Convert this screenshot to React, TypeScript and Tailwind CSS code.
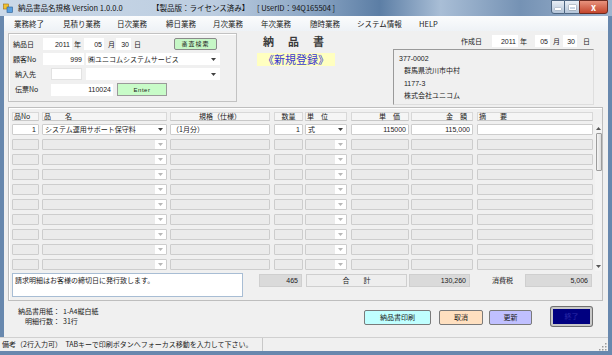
import React from 'react';

type P = { className?: string; children?: React.ReactNode };

function Arrow({ light }: { light?: boolean }) {
  return (
    <svg width="5" height="3" viewBox="0 0 5 3" className="shrink-0">
      <path d="M0 0h5L2.5 3z" fill={light ? '#b8b8b8' : '#404040'} />
    </svg>
  );
}

function Cell({ className = '', children }: P) {
  return (
    <div className={`flex h-[11px] shrink-0 items-center rounded-[1px] border border-[#cdcdcd] ${className}`}>
      {children}
    </div>
  );
}

function Combo({ className = '', children, empty }: P & { empty?: boolean }) {
  return (
    <Cell className={`${empty ? 'bg-[#ebebeb]' : 'bg-white'} ${className}`}>
      <span className="flex-1 whitespace-nowrap pl-[2px]">{children}</span>
      <span className="flex h-full w-[11px] items-center justify-center bg-white">
        <Arrow light={empty} />
      </span>
    </Cell>
  );
}

function Input({ className = '', children }: P) {
  return <div className={`flex h-[12px] shrink-0 items-center justify-end bg-white pr-[2px] font-['Liberation_Sans',sans-serif] text-[7px] ${className}`}>{children}</div>;
}

function HeadCell({ className = '', children }: P) {
  return (
    <div className={`flex h-[9px] shrink-0 items-center border border-[#d8d8d8] border-b-[#c8c8c8] bg-[#f5f5f5] ${className}`}>
      {children}
    </div>
  );
}

function Row({ empty, data }: { empty?: boolean; data?: string[] }) {
  const bg = empty ? 'bg-[#ebebeb]' : 'bg-white';
  const d = data ?? [];
  return (
    <div className="flex h-[11px] items-center">
      <Cell className={`w-[27px] justify-end pr-[2px] font-['Liberation_Sans',sans-serif] ${bg}`}>{d[0]}</Cell>
      <Combo className="ml-[3px] w-[125px]" empty={empty}>{d[1]}</Combo>
      <Cell className={`ml-[3px] w-[100px] pl-[1px] ${bg}`}>{d[2]}</Cell>
      <Cell className={`ml-[4px] w-[29px] justify-end pr-[2px] font-['Liberation_Sans',sans-serif] ${bg}`}>{d[3]}</Cell>
      <Combo className="ml-[2px] w-[42px]" empty={empty}>{d[4]}</Combo>
      <Cell className={`ml-[4px] w-[58px] justify-end pr-[2px] font-['Liberation_Sans',sans-serif] ${bg}`}>{d[5]}</Cell>
      <Cell className={`ml-[2px] w-[62px] justify-end pr-[2px] font-['Liberation_Sans',sans-serif] ${bg}`}>{d[6]}</Cell>
      <Cell className={`ml-[4px] w-[116px] ${bg}`}>{d[7]}</Cell>
    </div>
  );
}

const menus = [
  ['業務終了', 'ml-[10px] w-[49px]'],
  ['見積り業務', 'w-[54px]'],
  ['日次業務', 'w-[49px]'],
  ['締日業務', 'w-[47px]'],
  ['月次業務', 'w-[48px]'],
  ['年次業務', 'w-[49px]'],
  ['随時業務', 'w-[47px]'],
  ['システム情報', 'w-[62px]'],
  ['HELP', 'w-[40px]'],
];

export default function App() {
  return (
    <div className="flex h-[355px] w-[612px] flex-col overflow-hidden bg-[#6888ae] font-['Noto_Sans_CJK_JP',sans-serif] text-[7px] leading-none text-[#1a1a1a]">
      {/* title bar */}
      <div className="flex h-[16px] shrink-0 items-center bg-[linear-gradient(90deg,#cbd9e8_0%,#bccde0_35%,#8ea8c6_50%,#5c7ea5_62%,#a9bed6_72%,#7592b4_85%,#9fb5cf_100%)] text-[7.5px] text-[#111]">
        <svg width="10" height="10" viewBox="0 0 10 10" className="ml-[3px]">
          <rect x="0.5" y="1" width="5" height="5" fill="#f2c230" stroke="#a07010" strokeWidth="0.6" />
          <rect x="4" y="4" width="5.5" height="5.5" fill="#5aa0e0" stroke="#2a5c90" strokeWidth="0.6" />
        </svg>
        <span className="ml-[5px] w-[134px]">納品書品名規格 Version 1.0.0.0</span>
        <span className="w-[105px]">【製品版：ライセンス済み】</span>
        <span>[ UserID：94Q165504 ]</span>
        <div className="ml-auto mr-[4px] flex h-[14px] self-start">
          <div className="flex w-[14px] items-end justify-center rounded-bl-[3px] border border-[#4d6580] bg-[linear-gradient(#e8eef5,#b4c5d9)] pb-[3px]">
            <div className="h-[2px] w-[6px] bg-white shadow-[0_0_1px_#333]" />
          </div>
          <div className="flex w-[14px] items-center justify-center border-y border-[#4d6580] bg-[linear-gradient(#e8eef5,#b4c5d9)]">
            <div className="h-[5px] w-[7px] border border-t-2 border-white shadow-[0_0_1px_#333]" />
          </div>
          <div className="flex w-[29px] items-center justify-center rounded-br-[3px] border border-[#6b2a20] bg-[linear-gradient(#e8937e,#c4452c)] text-[9px] font-bold text-white">
            x
          </div>
        </div>
      </div>

      {/* client */}
      <div className="mx-[4px] flex h-[321px] shrink-0 flex-col bg-[#f0f0f0]">
        {/* menu */}
        <div className="flex h-[15px] shrink-0 items-center bg-[linear-gradient(#fbfcfd,#eef2f6)] text-[7.5px]">
          {menus.map(([t, c]) => (
            <span key={t} className={c}>{t}</span>
          ))}
        </div>

        {/* header */}
        <div className="flex h-[76px] shrink-0">
          <div className="ml-[4px] mt-[2px] flex h-[69px] w-[229px] flex-col gap-[3px] border border-[#c2c2c2] pl-[4px] pt-[4px] shadow-[inset_1px_1px_0_#fff]">
            <div className="flex h-[12px] items-center">
              <span className="w-[30px]">納品日</span>
              <Input className="w-[29px]">2011</Input>
              <span className="w-[12px] pl-[2px]">年</span>
              <Input className="w-[20px]">05</Input>
              <span className="w-[12px] pl-[4px]">月</span>
              <Input className="w-[15px]">30</Input>
              <span className="w-[43px] pl-[3px]">日</span>
              <div className="flex h-[12px] w-[43px] items-center justify-center rounded-[2px] border border-[#8a8a8a] bg-[#c6f7c6] text-[6px] tracking-[1px]">審査検索</div>
            </div>
            <div className="flex h-[12px] items-center">
              <span className="w-[30px]">顧客No</span>
              <Input className="w-[41px]">999</Input>
              <div className="ml-[2px] flex h-[12px] w-[134px] items-center bg-white pl-[2px]">
                <span className="flex-1">㈱ユニコムシステムサービス</span>
                <span className="pr-[4px]"><Arrow /></span>
              </div>
            </div>
            <div className="flex h-[12px] items-center">
              <span className="w-[38px] pl-[2px]">納入先</span>
              <Input className="w-[31px] border border-[#e2e2e2]" />
              <div className="ml-[4px] flex h-[12px] w-[134px] items-center justify-end bg-white pr-[4px]">
                <Arrow />
              </div>
            </div>
            <div className="flex h-[13px] items-center">
              <span className="w-[38px] pl-[2px]">伝票No</span>
              <Input className="w-[62px]">110024</Input>
              <div className="ml-[4px] flex h-[13px] w-[50px] items-center justify-center border border-[#9a9a9a] bg-[#c8fcc8] font-['Liberation_Sans',sans-serif] text-[6px] tracking-[0.5px]">Enter</div>
            </div>
          </div>

          <div className="flex w-[156px] flex-col">
            <span className="ml-[26px] mt-[5px] text-[11px] font-semibold tracking-[14px] text-[#3a3a3a]">納品書</span>
            <div className="ml-[20px] mt-[6px] flex h-[13px] w-[78px] items-center justify-center bg-[#ffffc0] text-[11px] text-[#3838d0]">《新規登録》</div>
          </div>

          <div className="flex w-[201px] flex-col">
            <div className="ml-[68px] mt-[4px] flex h-[12px] items-center">
              <span className="w-[31px]">作成日</span>
              <Input className="w-[26px]">2011</Input>
              <span className="w-[17px] pl-[2px]">年</span>
              <Input className="w-[15px]">05</Input>
              <span className="w-[13px] pl-[3px]">月</span>
              <Input className="w-[14px]">30</Input>
              <span className="pl-[6px]">日</span>
            </div>
            <div className="mt-[2px] flex h-[56px] flex-col justify-around border border-[#9a9a9a] border-b-[#dedede] border-r-[#dedede] py-[2px] pl-[5px]">
              <span className="font-['Liberation_Sans',sans-serif]">377-0002</span>
              <span className="pl-[5px]">群馬県渋川市中村</span>
              <span className="pl-[5px] font-['Liberation_Sans',sans-serif]">1177-3</span>
              <span className="pl-[5px]">株式会社ユニコム</span>
            </div>
          </div>
        </div>

        {/* detail group */}
        <div className="ml-[4px] flex h-[194px] w-[595px] shrink-0 flex-col border border-[#bebebe] pl-[3px] pt-[4px] shadow-[inset_1px_1px_0_#fff]">
          <div className="flex h-[9px] items-center">
            <HeadCell className="w-[27px] pl-[1px]">品No</HeadCell>
            <HeadCell className="ml-[3px] w-[125px] pl-[1px]">品　　名</HeadCell>
            <HeadCell className="ml-[3px] w-[100px] justify-center">規格（仕様）</HeadCell>
            <HeadCell className="ml-[4px] w-[29px] justify-center">数量</HeadCell>
            <HeadCell className="ml-[2px] w-[42px] pl-[1px]">単　位</HeadCell>
            <HeadCell className="ml-[4px] w-[58px] justify-end pr-[8px]">単　価</HeadCell>
            <HeadCell className="ml-[2px] w-[62px] justify-end pr-[5px]">金　額</HeadCell>
            <HeadCell className="ml-[4px] w-[116px] pl-[1px]">摘　　要</HeadCell>
          </div>

          <div className="mt-[3px] flex">
            <div className="flex flex-col gap-[4px]">
              <Row data={['1', 'システム運用サポート保守料', '（1月分）', '1', '式', '115000', '115,000', '']} />
              {Array.from({ length: 9 }).map((_, i) => (
                <Row key={i} empty />
              ))}
            </div>
            <div className="ml-[2px] flex h-[147px] w-[7px] flex-col items-center bg-[#f3f3f3]">
              <svg width="5" height="3" viewBox="0 0 5 3" className="mt-[3px]"><path d="M2.5 0L5 3H0z" fill="#555" /></svg>
              <div className="mt-[3px] h-[38px] w-[6px] rounded-[1px] border border-[#9c9c9c] bg-[linear-gradient(90deg,#f4f4f4,#dcdcdc)]" />
              <svg width="5" height="3" viewBox="0 0 5 3" className="mb-[3px] mt-auto"><path d="M0 0h5L2.5 3z" fill="#555" /></svg>
            </div>
          </div>

          <div className="mt-[2px] flex items-start">
            <div className="h-[24px] w-[231px] border border-[#a8bdd4] bg-white pl-[2px] pt-[3px]">請求明細はお客様の締切日に発行致します。</div>
            <div className="ml-[16px] mt-[1px] flex h-[13px] w-[43px] items-center justify-end border border-[#cfcfcf] bg-[#dadada] pr-[3px] font-['Liberation_Sans',sans-serif]">465</div>
            <div className="ml-[4px] mt-[1px] flex h-[13px] w-[101px] items-center justify-center border border-[#cfcfcf] bg-[#eeeeee]">合　　計</div>
            <div className="ml-[2px] mt-[1px] flex h-[13px] w-[61px] items-center justify-end border border-[#cfcfcf] bg-[#dadada] pr-[3px] font-['Liberation_Sans',sans-serif]">130,260</div>
            <span className="mt-[4px] w-[55px] pl-[22px]">消費税</span>
            <div className="mt-[1px] flex h-[13px] w-[67px] items-center justify-end border border-[#cfcfcf] bg-[#dadada] pr-[3px] font-['Liberation_Sans',sans-serif]">5,006</div>
          </div>
        </div>

        {/* bottom */}
        <div className="flex flex-1">
          <div className="ml-[9px] mt-[5px] flex flex-col">
            <div className="flex h-[10px] items-center">
              <span className="w-[47px] text-right">納品書用紙：</span>
              <span className="ml-[3px]">1-A4縦白紙</span>
            </div>
            <div className="flex h-[10px] items-center">
              <span className="w-[47px] text-right">明細行数：</span>
              <span className="ml-[3px]">31行</span>
            </div>
          </div>
          <div className="ml-auto mr-[16px] mt-[6px] flex items-start">
            <div className="mt-[3px] flex h-[15px] w-[67px] items-center justify-center rounded-[2px] border border-[#7a7a7a] bg-[#c0ffff]">納品書印刷</div>
            <div className="ml-[8px] mt-[3px] flex h-[15px] w-[44px] items-center justify-center rounded-[2px] border border-[#7a7a7a] bg-[#ffe0c0]">取消</div>
            <div className="ml-[6px] mt-[3px] flex h-[15px] w-[43px] items-center justify-center rounded-[2px] border border-[#7a7a7a] bg-[#c0c0ff]">更新</div>
            <div className="ml-[19px] flex h-[19px] w-[41px] items-center justify-center rounded-[2px] border-2 border-[#c8c8c8] bg-[#000080] text-[#2a2aa8] shadow-[0_0_0_1px_#707070]">終了</div>
          </div>
        </div>
      </div>

      {/* status bar */}
      <div className="mr-[4px] flex h-[14px] shrink-0 items-center border-t border-[#d0d0d0] bg-[#f0f0f0]">
        <span className="w-[262px] pl-[2px]">備考（2行入力可）　TABキーで印刷ボタンへフォーカス移動を入力して下さい。</span>
        <div className="h-full w-px bg-[#c8c8c8]" />
        <svg width="8" height="8" viewBox="0 0 8 8" className="ml-auto mr-[1px] self-end">
          <g fill="#9a9a9a"><rect x="6" y="0" width="1.5" height="1.5" /><rect x="3" y="3" width="1.5" height="1.5" /><rect x="6" y="3" width="1.5" height="1.5" /><rect x="0" y="6" width="1.5" height="1.5" /><rect x="3" y="6" width="1.5" height="1.5" /><rect x="6" y="6" width="1.5" height="1.5" /></g>
        </svg>
      </div>
    </div>
  );
}
